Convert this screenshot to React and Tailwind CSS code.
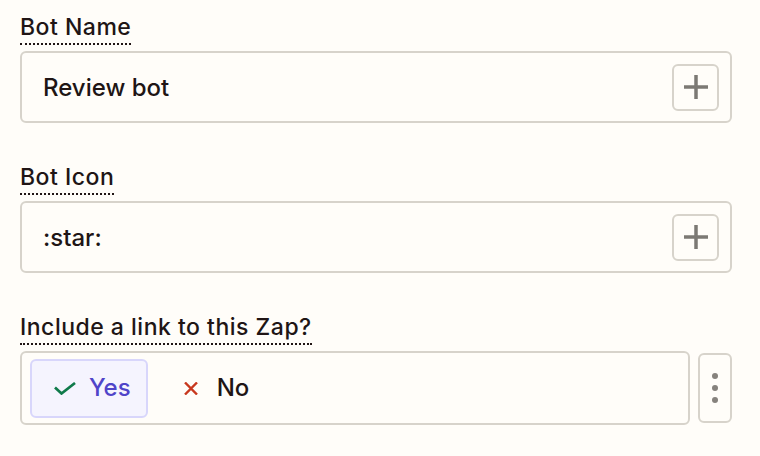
import { useState } from "react";

function PlusIcon() {
  return (
    <svg width="24" height="24" viewBox="0 0 24 24" fill="none">
      <path d="M12 0v24M0 12h24" stroke="#7c7974" strokeWidth="3.5" />
    </svg>
  );
}

function Field({ label, children }) {
  return (
    <div className="flex flex-col items-start">
      <span className="text-[23px] leading-[28px] font-medium tracking-[0.5px] text-[#201515] pb-[2px] border-b-2 border-dotted border-[#201515]">
        {label}
      </span>
      <div className="mt-[6px] w-full">{children}</div>
    </div>
  );
}

function TextInput({ value }) {
  return (
    <div className="h-[72px] w-full flex items-center justify-between pl-[21px] pr-[11px] border-2 border-[#d7d3cb] rounded-[6px] bg-[#fffdf9]">
      <span className="text-[24px] font-medium text-[#201515] mt-[2px]">{value}</span>
      <button className="w-[47px] h-[47px] flex items-center justify-center border-2 border-[#d7d3cb] rounded-[6px]">
        <PlusIcon />
      </button>
    </div>
  );
}

export default function App() {
  const [choice, setChoice] = useState("yes");

  const on = "h-[59px] flex items-center rounded-[6px] border-2 border-[#d8d6fb] bg-[#f5f4fe] text-[24px] font-medium text-[#4f44c9]";
  const off = "h-[59px] flex items-center rounded-[6px] border-2 border-transparent text-[24px] font-medium text-[#201515]";

  return (
    <div
      className="min-h-screen w-[760px] h-[456px] bg-[#fffdf9] pl-[20px] pr-[28px] pt-[13px] flex flex-col gap-[40px]"
      style={{ fontFamily: "Inter, 'Noto Sans', sans-serif" }}
    >
      <Field label="Bot Name">
        <TextInput value="Review bot" />
      </Field>
      <Field label="Bot Icon">
        <TextInput value=":star:" />
      </Field>
      <Field label="Include a link to this Zap?">
        <div className="flex gap-[8px]">
          <div className="flex-1 h-[74px] flex items-center gap-[12px] px-[8px] border-2 border-[#d7d3cb] rounded-[6px]">
            <button
              onClick={() => setChoice("yes")}
              className={(choice === "yes" ? on : off) + " gap-[13px] pl-[22px] pr-[15px]"}
            >
              <svg width="22" height="13" viewBox="0 0 22 13" fill="none">
                <path d="M1 5.5l6.5 6L21 1" stroke="#0f7a4a" strokeWidth="2.7" />
              </svg>
              Yes
            </button>
            <button
              onClick={() => setChoice("no")}
              className={(choice === "no" ? on : off) + " gap-[19px] pl-[22px] pr-[15px]"}
            >
              <svg width="14" height="13" viewBox="0 0 14 13" fill="none">
                <path d="M1 0.5l12 12M13 0.5l-12 12" stroke="#c8381e" strokeWidth="2.4" />
              </svg>
              No
            </button>
          </div>
          <button className="w-[34px] h-[70px] mt-[2px] flex flex-col items-center justify-center gap-[6px] border-2 border-[#d7d3cb] rounded-[6px]">
            <span className="w-[6px] h-[6px] rounded-full bg-[#86827d]" />
            <span className="w-[6px] h-[6px] rounded-full bg-[#86827d]" />
            <span className="w-[6px] h-[6px] rounded-full bg-[#86827d]" />
          </button>
        </div>
      </Field>
    </div>
  );
}
